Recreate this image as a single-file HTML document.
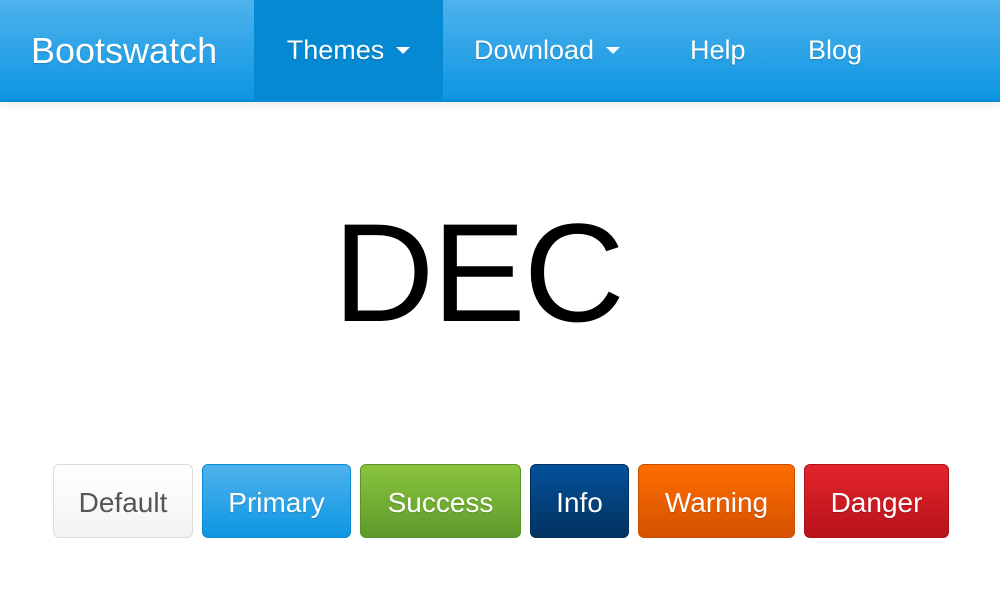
<!DOCTYPE html>
<html><head><meta charset="utf-8"><style>
body{margin:0;width:1000px;height:600px;background:#fff;font-family:"Liberation Sans",Arial,sans-serif;overflow:hidden;position:relative}
.nav{position:absolute;left:0;top:0;width:1000px;height:99px;background:linear-gradient(#4eb2ec,#0d96e3);border-bottom:3px solid #0a8bd6;box-shadow:0 3px 8px rgba(0,0,0,.08)}
.nav div{position:absolute;top:0;height:99px;line-height:101px;color:#fff;font-size:27px;text-shadow:0 1px 1px rgba(0,0,0,.2)}
.caret{display:inline-block;width:0;height:0;border-left:7px solid transparent;border-right:7px solid transparent;border-top:7px solid #fff;vertical-align:middle;margin-left:12px;margin-top:-3px}
.dec{position:absolute;left:-22px;width:1000px;top:198px;text-align:center;font-size:140px;line-height:150px;color:#000;letter-spacing:-2px}
.b{position:absolute;top:464px;height:72px;line-height:76px;border-radius:6px;text-align:center;color:#fff;font-size:28px;text-shadow:0 1px 1px rgba(0,0,0,.2);border:1px solid}
</style></head><body>
<div class="nav">
<div style="left:0;width:254px;padding-left:31px;box-sizing:border-box;font-size:36px">Bootswatch</div>
<div style="left:254px;width:189px;background:#0589d2;text-align:center">Themes<span class="caret"></span></div>
<div style="left:474px">Download<span class="caret"></span></div>
<div style="left:690px">Help</div>
<div style="left:808px">Blog</div>
</div>
<div class="dec">DEC</div>
<div class="b" style="left:53px;width:138px;background:linear-gradient(#fff,#f3f3f3);border-color:#dcdcdc;color:#555;text-shadow:none">Default</div>
<div class="b" style="left:202px;width:147px;background:linear-gradient(#4eb2ec,#0d96e3);border-color:#0c8ad2">Primary</div>
<div class="b" style="left:360px;width:159px;background:linear-gradient(#8ac43f,#5e9a2b);border-color:#5a9429">Success</div>
<div class="b" style="left:530px;width:97px;background:linear-gradient(#04519b,#02325f);border-color:#02305a">Info</div>
<div class="b" style="left:638px;width:155px;background:linear-gradient(#ff6d00,#d45200);border-color:#c94f00">Warning</div>
<div class="b" style="left:804px;width:143px;background:linear-gradient(#e3242b,#b8121a);border-color:#b01018">Danger</div>
</body></html>
